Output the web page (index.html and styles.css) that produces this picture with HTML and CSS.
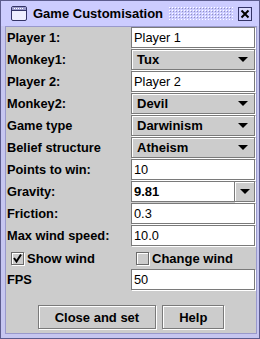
FILE: index.html
```html
<!DOCTYPE html>
<html>
<head>
<meta charset="utf-8">
<link rel="stylesheet" href="styles.css">
</head>
<body>
<div class="window">
  <div class="titlebar">
    <svg class="ticon" width="16" height="15" viewBox="0 0 16 15">
      <rect x="0.5" y="0.5" width="15" height="14" rx="1.5" fill="#eeeeff" stroke="#333366"/>
      <rect x="1" y="1" width="14" height="3" fill="#9999cc"/>
      <line x1="0.5" y1="4.5" x2="15.5" y2="4.5" stroke="#333366"/>
      <g fill="#ffffff"><rect x="3" y="2" width="1" height="1"/><rect x="5" y="2" width="1" height="1"/><rect x="7" y="2" width="1" height="1"/><rect x="9" y="2" width="1" height="1"/><rect x="11" y="2" width="1" height="1"/></g>
    </svg>
    <span class="title">Game Customisation</span>
    <svg class="bumps" height="13">
      <defs>
        <pattern id="bp" width="3" height="3" patternUnits="userSpaceOnUse">
          <rect x="0" y="0" width="1" height="1" fill="#ffffff"/>
          <rect x="1" y="1" width="1" height="1" fill="#9090c0"/>
        </pattern>
      </defs>
      <rect width="100%" height="100%" fill="url(#bp)"/>
    </svg>
    <span class="close">
      <svg width="14" height="14" viewBox="0 0 14 14">
        <rect x="0.5" y="0.5" width="13" height="13" fill="#ccccff" stroke="#333366"/>
        <path d="M3.5 3.5 L10.5 10.5 M10.5 3.5 L3.5 10.5" stroke="#000" stroke-width="2"/>
        <path d="M2 2 H12" stroke="#fff" stroke-width="1" opacity="0.7"/>
      </svg>
    </span>
  </div>
  <div class="content">
    <div class="grid">
      <span class="lbl">Player 1:</span><div class="field">Player 1</div>
      <span class="lbl">Monkey1:</span><div class="combo"><span>Tux</span><i class="arrow"></i></div>
      <span class="lbl">Player 2:</span><div class="field">Player 2</div>
      <span class="lbl">Monkey2:</span><div class="combo"><span>Devil</span><i class="arrow"></i></div>
      <span class="lbl">Game type</span><div class="combo"><span>Darwinism</span><i class="arrow"></i></div>
      <span class="lbl">Belief structure</span><div class="combo"><span>Atheism</span><i class="arrow"></i></div>
      <span class="lbl">Points to win:</span><div class="field">10</div>
      <span class="lbl">Gravity:</span><div class="ecombo"><div class="efield">9.81</div><div class="ebtn"><i class="arrow"></i></div></div>
      <span class="lbl">Friction:</span><div class="field">0.3</div>
      <span class="lbl">Max wind speed:</span><div class="field">10.0</div>
      <span class="check"><span class="box"><svg width="11" height="11" viewBox="0 0 11 11"><path d="M2 5 L4.5 8.5 L9 1.5" fill="none" stroke="#000" stroke-width="2"/></svg></span><span class="clbl">Show wind</span></span>
      <span class="check"><span class="box"></span><span class="clbl">Change wind</span></span>
      <span class="lbl">FPS</span><div class="field">50</div>
    </div>
    <div class="buttons">
      <button class="btn">Close and set</button>
      <button class="btn">Help</button>
    </div>
  </div>
</div>
</body>
</html>
```
FILE: styles.css
```css
html, body {
  margin: 0;
  padding: 0;
  background: #ffffff;
}
.window {
  width: 260px;
  height: 339px;
  box-sizing: border-box;
  border: 1px solid #5c5c8e;
  background: #c6c6f0;
  padding: 0 2px 4px 4px;
  display: flex;
  flex-direction: column;
  font-family: "Liberation Sans", Arial, sans-serif;
  color: #000;
}
.titlebar {
  height: 25px;
  display: flex;
  align-items: center;
  background: #ccccff;
  margin: 0 -2px 0 -4px;
  padding: 0 7px 0 10px;
}
.ticon {
  flex: none;
}
.title {
  font-weight: bold;
  font-size: 13px;
  margin-left: 6px;
  white-space: nowrap;
  color: #000;
}
.bumps {
  flex: 1;
  margin-left: 6px;
  margin-right: 5px;
}
.close {
  display: flex;
  flex: none;
}
.content {
  flex: 1;
  border: 1px solid #9999cc;
  background: #cccccc;
  display: flex;
  flex-direction: column;
}
.grid {
  display: grid;
  grid-template-columns: 125px 125px;
  grid-auto-rows: 22px;
}
.lbl {
  font-weight: bold;
  font-size: 12.8px;
  line-height: 22px;
  padding-left: 1px;
  white-space: nowrap;
}
.field {
  width: 124px;
  height: 21px;
  box-sizing: border-box;
  border: 1px solid #7a7a7a;
  box-shadow: 1px 1px 0 #ffffff;
  background: #ffffff;
  font-size: 12.8px;
  line-height: 19px;
  padding-left: 2px;
}
.combo {
  width: 124px;
  height: 21px;
  box-sizing: border-box;
  border: 1px solid #7a7a7a;
  box-shadow: 1px 1px 0 #ffffff, inset 1px 1px 0 #ffffff;
  background: #cccccc;
  font-size: 13px;
  font-weight: bold;
  line-height: 19px;
  padding-left: 5px;
  padding-right: 6px;
  display: flex;
  justify-content: space-between;
  align-items: center;
}
.arrow {
  display: block;
  width: 0;
  height: 0;
  border-top: 5px solid #000;
  border-left: 5px solid transparent;
  border-right: 5px solid transparent;
}
.ecombo {
  width: 124px;
  height: 21px;
  display: flex;
}
.efield {
  width: 103px;
  height: 21px;
  box-sizing: border-box;
  border: 1px solid #7a7a7a;
  border-right: none;
  background: #ffffff;
  font-size: 13px;
  font-weight: bold;
  line-height: 19px;
  padding-left: 2px;
}
.ebtn {
  flex: 1;
  box-sizing: border-box;
  border: 1px solid #7a7a7a;
  box-shadow: 1px 1px 0 #ffffff, inset 1px 1px 0 #ffffff;
  background: #cccccc;
  display: flex;
  align-items: center;
  justify-content: center;
}
.check {
  display: flex;
  align-items: center;
  padding-left: 5px;
  gap: 3px;
}
.box {
  width: 13px;
  height: 13px;
  box-sizing: border-box;
  border: 1px solid #6a6a6a;
  box-shadow: 1px 1px 0 #ffffff, inset 1px 1px 0 #ffffff;
  background: #cccccc;
  display: flex;
  align-items: center;
  justify-content: center;
}
.clbl {
  font-weight: bold;
  font-size: 13px;
  white-space: nowrap;
}
.buttons {
  display: flex;
  justify-content: center;
  gap: 6px;
  padding-top: 14px;
}
.btn {
  height: 24px;
  box-sizing: border-box;
  border: 1px solid #7a7a7a;
  box-shadow: 1px 1px 0 #ffffff, inset 1px 1px 0 #ffffff;
  background: #cccccc;
  font-family: "Liberation Sans", Arial, sans-serif;
  font-weight: bold;
  font-size: 13px;
  padding: 0 16px;
  color: #000;
  margin: 0;
}
```
